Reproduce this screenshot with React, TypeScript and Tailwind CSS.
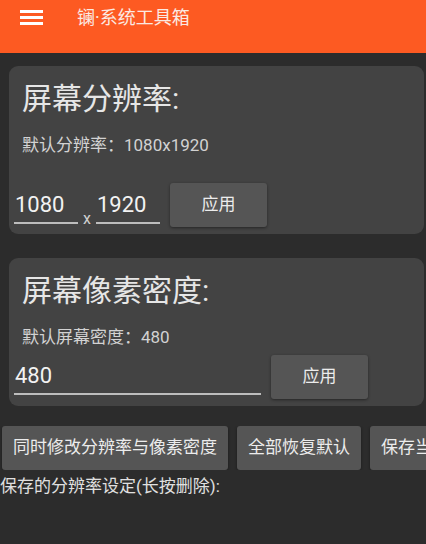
import React, { useState } from 'react';

const font = { fontFamily: 'Roboto, "Noto Sans CJK SC", sans-serif' };

const ApplyButton: React.FC<{ className?: string }> = ({ className = '' }) => (
  <button
    type="button"
    className={`h-[44px] w-[97px] shrink-0 rounded-[3px] bg-[#555555] text-[17px] text-[#ececec] shadow-[0_1px_3px_rgba(0,0,0,0.45)] ${className}`}
  >
    应用
  </button>
);

const LineInput: React.FC<{ value: string; onChange: (v: string) => void; className?: string }> = ({ value, onChange, className = '' }) => (
  <input
    value={value}
    onChange={(e) => onChange(e.target.value)}
    className={`h-[34px] border-b-2 border-[#bdbdbd] bg-transparent px-[1px] pb-[4px] text-[22px] leading-[26px] text-[#f2f2f2] outline-none ${className}`}
  />
);

export default function App() {
  const [w, setW] = useState('1080');
  const [h, setH] = useState('1920');
  const [dpi, setDpi] = useState('480');

  return (
    <div className="h-[544px] w-[426px] overflow-hidden bg-[#2c2c2c]" style={font}>
      {/* toolbar */}
      <div className="flex h-[53px] items-start bg-[#fd5a22] pt-[7px]">
        <div className="ml-[20px] mt-[3px] flex w-[23px] flex-col gap-[3px]">
          <span className="h-[3px] bg-white" />
          <span className="h-[3px] bg-white" />
          <span className="h-[3px] bg-white" />
        </div>
        <span className="ml-[34px] text-[18px] leading-[22px] text-[#fbe9e2]">镧·系统工具箱</span>
      </div>

      {/* 分辨率 */}
      <div className="ml-[9px] mr-[2px] mt-[13px] flex h-[168px] flex-col rounded-[9px] bg-[#434343] pt-[15px]">
        <div className="pl-[13px] text-[30px] leading-[36px] text-[#e6e6e6]">屏幕分辨率:</div>
        <div className="mt-[18px] pl-[13px] text-[17px] leading-[20px] text-[#d2d2d2]">默认分辨率：1080x1920</div>
        <div className="mt-[28px] flex items-start pl-[5px]">
          <LineInput value={w} onChange={setW} className="mt-[7px] w-[64px]" />
          <span className="mx-[5px] mt-[28px] text-[16px] leading-[16px] text-[#cfcfcf]">x</span>
          <LineInput value={h} onChange={setH} className="mt-[7px] w-[64px]" />
          <ApplyButton className="ml-[10px]" />
        </div>
      </div>

      {/* 像素密度 */}
      <div className="ml-[9px] mr-[2px] mt-[24px] flex h-[148px] flex-col rounded-[9px] bg-[#434343] pt-[15px]">
        <div className="pl-[13px] text-[30px] leading-[36px] text-[#e6e6e6]">屏幕像素密度:</div>
        <div className="mt-[18px] pl-[13px] text-[17px] leading-[20px] text-[#d2d2d2]">默认屏幕密度：480</div>
        <div className="mt-[8px] flex items-start pl-[5px]">
          <LineInput value={dpi} onChange={setDpi} className="mt-[6px] w-[247px]" />
          <ApplyButton className="ml-[10px]" />
        </div>
      </div>

      {/* 操作 */}
      <div className="mt-[20px] flex gap-[9px] overflow-hidden pl-[2px]">
        {['同时修改分辨率与像素密度', '全部恢复默认', '保存当前分辨率'].map((t) => (
          <button
            key={t}
            type="button"
            className="h-[44px] shrink-0 whitespace-nowrap rounded-[3px] bg-[#555555] px-[11px] text-[17px] text-[#ececec] shadow-[0_1px_3px_rgba(0,0,0,0.45)]"
          >
            {t}
          </button>
        ))}
      </div>
      <div className="mt-[6px] text-[17px] leading-[20px] text-[#e0e0e0]">保存的分辨率设定(长按删除):</div>
    </div>
  );
}
